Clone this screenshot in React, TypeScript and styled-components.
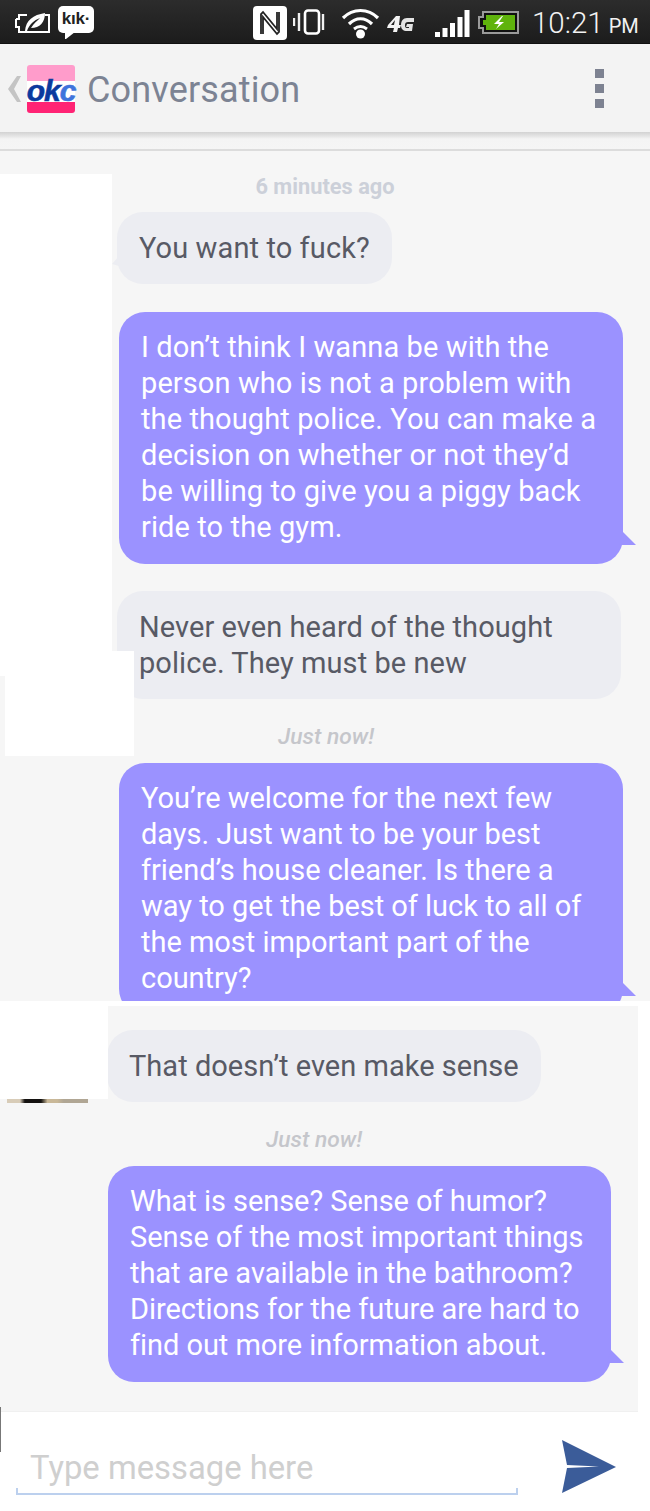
import React from "react";
import styled, { createGlobalStyle } from "styled-components";

const Global = createGlobalStyle`
  html, body { margin: 0; padding: 0; background: #fff; }
  #root { width: 650px; height: 1511px; overflow: hidden; }
  * { box-sizing: border-box; }
`;

const Page = styled.div`
  position: relative;
  width: 650px;
  height: 1511px;
  overflow: hidden;
  font-family: Roboto, "Liberation Sans", sans-serif;
  background: #fff;
`;

const StatusBar = styled.div`
  height: 44px;
  display: flex;
  align-items: flex-start;
  padding-left: 15px;
  background: linear-gradient(#2c2c2c, #1c1c1c);
  border-bottom: 1px solid #111;
`;

const StatusSlot = styled.div<{ $ml: number; $mt: number }>`
  margin-left: ${(p) => p.$ml}px;
  margin-top: ${(p) => p.$mt}px;
  flex: none;
  display: flex;
`;

const KikBadge = styled.div`
  position: relative;
  width: 36px;
  height: 27px;
  background: #fff;
  border-radius: 5px;
  color: #222;
  font-family: "Liberation Sans", sans-serif;
  font-weight: 700;
  font-size: 17px;
  line-height: 25px;
  text-align: center;
  letter-spacing: -0.2px;
  &::after {
    content: "";
    position: absolute;
    left: 7px;
    top: 26px;
    border-top: 7px solid #fff;
    border-right: 9px solid transparent;
    border-left: 1px solid #fff;
  }
`;

const Clock = styled.div`
  margin-left: 13px;
  margin-top: 5px;
  color: #f2f2f2;
  font-size: 29.5px;
  line-height: 36px;
  font-weight: 300;
  white-space: nowrap;
`;

const ClockSuffix = styled.span`
  font-size: 20px;
  margin-left: 5px;
  font-weight: 400;
`;

const Header = styled.header`
  height: 88px;
  display: flex;
  align-items: center;
  background: #f3f3f3;
`;

const Logo = styled.div`
  width: 48px;
  height: 48px;
  margin-left: 6px;
  margin-top: 2px;
  padding-top: 3px;
  border-radius: 3px;
  background: linear-gradient(#ff9ccb 0 33%, #fff 33% 77%, #ff2374 77%);
  display: flex;
  align-items: center;
  justify-content: center;
  font-family: "Liberation Sans", sans-serif;
  font-style: italic;
  font-weight: 700;
  font-size: 30px;
  line-height: 44px;
  letter-spacing: -1px;
  color: #0b3a9e;
  -webkit-text-stroke: 0.6px currentColor;
`;

const LogoC = styled.span`
  color: #3f74dc;
`;

const Title = styled.h1`
  margin: 4px 0 0 12px;
  font-size: 36px;
  line-height: 44px;
  font-weight: 400;
  letter-spacing: 0.15px;
  color: #7c8393;
`;

const Kebab = styled.div`
  margin-left: auto;
  margin-right: 46px;
  margin-top: 1px;
  display: flex;
  flex-direction: column;
  gap: 5.5px;
`;

const KebabDot = styled.span`
  width: 9px;
  height: 9.5px;
  background: #7d8291;
`;

const HeaderEdge = styled.div`
  height: 19px;
  background: linear-gradient(#d2d2d2 0, #e9e9e9 5px, #efefef 6px, #f4f4f4 7px, #f5f5f5 17px, #dcdcdc 17px);
`;

const FirstPane = styled.section`
  height: 850px;
  overflow: hidden;
  padding-top: 23px;
  background: #f6f6f6;
`;

const SecondPane = styled.section`
  height: 410px;
  padding-top: 5px;
  background: #fff;
`;

const SecondInner = styled.div`
  width: 638px;
  height: 405px;
  padding-top: 24px;
  background: #f6f6f6;
`;

const Stamp = styled.div<{ $center: number; $mt: number; $italic?: boolean }>`
  width: ${(p) => p.$center * 2}px;
  height: 26px;
  margin-top: ${(p) => p.$mt}px;
  text-align: center;
  font-size: ${(p) => (p.$italic ? 22.8 : 21.8)}px;
  line-height: 26px;
  font-weight: ${(p) => (p.$italic ? 500 : 700)};
  font-style: ${(p) => (p.$italic ? "italic" : "normal")};
  color: ${(p) => (p.$italic ? "#c5c6cb" : "#ccd0d9")};
`;

const Bubble = styled.div<{ $x: number; $mt: number; $mine?: boolean; $w?: number; $track?: number }>`
  position: relative;
  width: ${(p) => (p.$w ? `${p.$w}px` : "fit-content")};
  margin-left: ${(p) => p.$x}px;
  margin-top: ${(p) => p.$mt}px;
  padding: ${(p) => (p.$mine ? "17px 22px 19px" : "18px 22px")};
  border-radius: 26px;
  font-size: 29px;
  line-height: 36px;
  letter-spacing: ${(p) => p.$track ?? 0.1}px;
  white-space: nowrap;
  background: ${(p) => (p.$mine ? "#9b92ff" : "#ecedf2")};
  color: ${(p) => (p.$mine ? "#fff" : "#585a65")};
`;

const TailRight = styled.svg`
  position: absolute;
  right: -14px;
  bottom: 18px;
  width: 18px;
  height: 14px;
`;

const TailLeft = styled.svg`
  position: absolute;
  left: -5px;
  top: 44px;
  width: 10px;
  height: 10px;
`;

const Composer = styled.footer`
  height: 101px;
  display: flex;
  background: #fff;
  border-top: 1px solid #f0f0f0;
  width: 638px;
`;

const Field = styled.div`
  width: 502px;
  height: 7px;
  margin-top: 76px;
  margin-left: 16px;
  position: relative;
  border: 2px solid #bcd0ee;
  border-top: 0;
`;

const Placeholder = styled.span`
  position: absolute;
  left: 12px;
  bottom: 3px;
  font-size: 32.8px;
  line-height: 44px;
  white-space: nowrap;
  color: #cfcfcf;
`;

const SendIcon = styled.svg`
  margin-left: 43px;
  margin-top: 27px;
  width: 56px;
  height: 56px;
  flex: none;
`;

const Redaction = styled.div<{ $l: number; $t: number; $w: number; $h: number }>`
  position: absolute;
  left: ${(p) => p.$l}px;
  top: ${(p) => p.$t}px;
  width: ${(p) => p.$w}px;
  height: ${(p) => p.$h}px;
  background: #fff;
`;

const AvatarSliver = styled.div`
  position: absolute;
  left: 7px;
  top: 1099px;
  width: 81px;
  height: 4px;
  background: linear-gradient(90deg, #d8ccb8 0 16%, #141210 22% 42%, #c9b898 50% 62%, #b0a694 70% 100%);
`;

const EdgeMark = styled.div`
  position: absolute;
  left: 0;
  top: 1407px;
  width: 1px;
  height: 45px;
  background: #777;
`;

const Tail = () => (
  <TailRight viewBox="0 0 18 14">
    <path d="M4 0 L17 13 L0 13 Z" fill="#9b92ff" />
  </TailRight>
);

const LeftTail = () => (
  <TailLeft viewBox="0 0 10 10">
    <path d="M7 0 L0 8 L7 10 Z" fill="#ecedf2" />
  </TailLeft>
);

export default function App() {
  return (
    <Page>
      <Global />
      <StatusBar>
        <StatusSlot $ml={0} $mt={12}>
          <svg width="36" height="22" viewBox="0 0 36 22" fill="none">
            <path d="M1 7h3V3h8M1 7v8h3v5h30V3h-4" stroke="#fff" strokeWidth="2" />
            <path d="M10 19C11 8 18 3 30 1c0 9-5 15-14 15 3-5 6-7 9-10-6 2-11 7-13 13z" fill="#fff" />
          </svg>
        </StatusSlot>
        <StatusSlot $ml={7} $mt={6}>
          <KikBadge>kık·</KikBadge>
        </StatusSlot>
        <StatusSlot $ml={159} $mt={6}>
          <svg width="34" height="34" viewBox="0 0 34 34">
            <rect width="34" height="34" rx="4" fill="#fff" />
            <path d="M8 28V8l2-2 14 17V6M26 6v20l-2 2L10 11v17" fill="none" stroke="#222" strokeWidth="1.8" />
          </svg>
        </StatusSlot>
        <StatusSlot $ml={6} $mt={9}>
          <svg width="32" height="26" viewBox="0 0 32 26" fill="none">
            <path d="M1 9v8M6 4v18" stroke="#f0f0f0" strokeWidth="2.4" />
            <rect x="12" y="1.5" width="14" height="23" rx="3" stroke="#fff" strokeWidth="2.6" />
            <path d="M30 5v16" stroke="#f0f0f0" strokeWidth="2.4" />
          </svg>
        </StatusSlot>
        <StatusSlot $ml={16} $mt={7}>
          <svg width="39" height="32" viewBox="0 0 39 32" fill="none">
            <path d="M2 11C12 1 27 1 37 11" stroke="#fff" strokeWidth="3.2" />
            <path d="M8 17c7-7 16-7 23 0" stroke="#fff" strokeWidth="3.2" />
            <path d="M13 22c4-3 9-3 13 0" stroke="#fff" strokeWidth="3" />
            <circle cx="19.5" cy="27" r="4.5" fill="#fff" />
          </svg>
        </StatusSlot>
        <StatusSlot $ml={7} $mt={15}>
          <svg width="28" height="18" viewBox="0 0 28 18">
            <path d="M9 1h4l-1 9h2l-1 3h-2l-1 4H6l1-4H0l1-3zM8 5l-4 5h3z" fill="#f4f4f4" fillRule="evenodd" />
            <path d="M27 3h-7c-4 0-6 3-6 7s2 6 6 6h5l1-7h-6l-1 3h3v1h-2c-2 0-2-2-2-3 0-2 1-3 3-3h6z" fill="#e4e4e4" />
          </svg>
        </StatusSlot>
        <StatusSlot $ml={20} $mt={10}>
          <svg width="35" height="27" viewBox="0 0 35 27" fill="#fff">
            <rect x="0" y="22" width="5" height="5" />
            <rect x="7.5" y="18" width="5" height="9" />
            <rect x="15" y="13" width="5" height="14" />
            <rect x="22.5" y="7" width="5" height="20" />
            <rect x="29.5" y="0" width="5" height="27" />
          </svg>
        </StatusSlot>
        <StatusSlot $ml={8} $mt={11}>
          <svg width="41" height="23" viewBox="0 0 41 23">
            <path d="M5 1h35v21H5v-5H1V6h4z" fill="#111" stroke="#9a9a9a" strokeWidth="2" />
            <path d="M8 4h29v15H8v-5H5V9h3z" fill="#5fb30c" />
            <path d="M24 5l-8 8h5l-3 5 8-7h-5l4-6z" fill="#fff" />
          </svg>
        </StatusSlot>
        <Clock>
          10:21<ClockSuffix>PM</ClockSuffix>
        </Clock>
      </StatusBar>

      <Header>
        <svg width="13" height="26" viewBox="0 0 13 26" style={{ marginLeft: 8, marginTop: 2, flex: "none" }}>
          <path d="M9 0h4L6 13l7 13H9L0 13z" fill="#c4c4c4" />
        </svg>
        <Logo>
          ok<LogoC>c</LogoC>
        </Logo>
        <Title>Conversation</Title>
        <Kebab>
          <KebabDot />
          <KebabDot />
          <KebabDot />
        </Kebab>
      </Header>
      <HeaderEdge />

      <FirstPane>
        <Stamp $center={325} $mt={0}>6 minutes ago</Stamp>
        <Bubble $x={117} $mt={12}>
          You want to fuck?
          <LeftTail />
        </Bubble>
        <Bubble $x={119} $mt={28} $w={504} $mine>
          I don’t think I wanna be with the
          <br />
          person who is not a problem with
          <br />
          the thought police. You can make a
          <br />
          decision on whether or not they’d
          <br />
          be willing to give you a piggy back
          <br />
          ride to the gym.
          <Tail />
        </Bubble>
        <Bubble $x={117} $mt={27} $w={504} $track={0.07}>
          Never even heard of the thought
          <br />
          police. They must be new
        </Bubble>
        <Stamp $center={326} $mt={25} $italic>Just now!</Stamp>
        <Bubble $x={119} $mt={13} $w={504} $mine $track={-0.03}>
          You’re welcome for the next few
          <br />
          days. Just want to be your best
          <br />
          friend’s house cleaner. Is there a
          <br />
          way to get the best of luck to all of
          <br />
          the most important part of the
          <br />
          country?
          <Tail />
        </Bubble>
      </FirstPane>

      <SecondPane>
        <SecondInner>
          <Bubble $x={107} $mt={0} $track={0.03}>That doesn’t even make sense</Bubble>
          <Stamp $center={314} $mt={25} $italic>Just now!</Stamp>
          <Bubble $x={108} $mt={13} $w={503} $mine $track={-0.05}>
            What is sense? Sense of humor?
            <br />
            Sense of the most important things
            <br />
            that are available in the bathroom?
            <br />
            Directions for the future are hard to
            <br />
            find out more information about.
            <Tail />
          </Bubble>
        </SecondInner>
      </SecondPane>

      <Composer>
        <Field>
          <Placeholder>Type message here</Placeholder>
        </Field>
        <SendIcon viewBox="0 0 56 56">
          <path d="M1 1L55 28 1 54l5-25 32-1.500L6 26z" fill="#3b5c99" />
        </SendIcon>
      </Composer>

      <Redaction $l={0} $t={174} $w={112} $h={502} />
      <Redaction $l={5} $t={651} $w={129} $h={105} />
      <Redaction $l={0} $t={1001} $w={108} $h={98} />
      <AvatarSliver />
      <EdgeMark />
    </Page>
  );
}
